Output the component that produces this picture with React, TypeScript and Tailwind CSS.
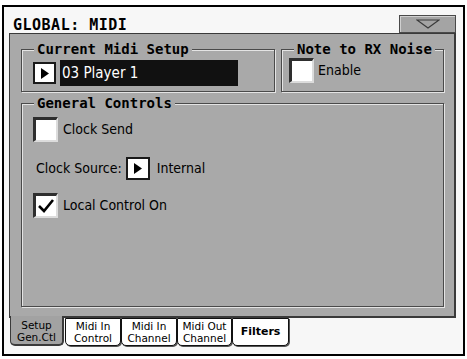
const mono = "font-['DejaVu_Sans_Mono',monospace] font-bold";

function ArrowButton({ size }: { size: string }) {
  return (
    <div className={`${size} bg-white border-2 border-[#1a1a1a] flex items-center justify-center shrink-0`}>
      <svg width="8" height="11" viewBox="0 0 8 11">
        <polygon points="0,0 8,5.5 0,11" fill="#000" />
      </svg>
    </div>
  );
}

function CheckBox({ checked }: { checked?: boolean }) {
  return (
    <div className="w-[25px] h-[25px] shrink-0 bg-white border-t-[3px] border-l-[3px] border-r-2 border-b-2 border-t-[#2e2e2e] border-l-[#2e2e2e] border-r-[#dcdcdc] border-b-[#dcdcdc] flex items-center justify-center">
      {checked && (
        <svg width="18" height="16" viewBox="0 0 18 16">
          <path d="M2 8 L7 13 L16 2" stroke="#000" strokeWidth="2.6" fill="none" />
        </svg>
      )}
    </div>
  );
}

function Group({ title, className, children }: { title: string; className: string; children: React.ReactNode }) {
  return (
    <fieldset className={`border border-[#4a4a4a] shadow-[inset_1px_1px_0_#e4e4e4,1px_1px_0_#e4e4e4] ${className}`}>
      <legend className={`ml-[12px] px-[3px] bg-[#a9a9a9] text-[14px] leading-[16px] ${mono}`}>{title}</legend>
      {children}
    </fieldset>
  );
}

const tabs = [
  { top: "Midi In", bottom: "Control", w: "w-[56px]" },
  { top: "Midi In", bottom: "Channel", w: "w-[56px]" },
  { top: "Midi Out", bottom: "Channel", w: "w-[55px]" },
];

export default function App() {
  return (
    <div className="w-[467px] h-[359px] bg-white pt-[5px] pl-[2px] font-['DejaVu_Sans_Condensed',sans-serif] text-black">
      <div className="w-[463px] h-[351px] border-2 border-black bg-[#f7f7f7] flex flex-col">
        {/* header */}
        <div className="h-[26px] flex justify-between items-start shrink-0">
          <span className={`ml-[9px] mt-[9px] text-[15px] leading-[18px] tracking-[0.5px] ${mono}`}>GLOBAL: MIDI</span>
          <div className="mt-[8px] mr-[7px] w-[57px] h-[18px] bg-[#a4a4a4] border border-[#4a4a4a] shadow-[inset_1px_1px_0_#d0d0d0] flex items-center justify-center">
            <svg width="24" height="10" viewBox="0 0 24 10">
              <polygon points="1,1 23,1 12,9" fill="none" stroke="#3a3a3a" strokeWidth="1.2" />
            </svg>
          </div>
        </div>

        {/* panel */}
        <div className="relative ml-[5px] w-[447px] h-[285px] shrink-0 bg-[#a9a9a9] border-l border-t border-r-2 border-b-2 border-[#3a3a3a] pt-[7px] pl-[11px]">
          <div className="flex gap-[6px]">
            <Group title="Current Midi Setup" className="w-[254px]">
              <div className="flex items-center gap-[4px] pl-[11px] pt-[3px] pb-[5px]">
                <ArrowButton size="w-[23px] h-[22px]" />
                <div className="w-[178px] h-[26px] bg-[#111] text-white text-[15px] leading-[26px] pl-[2px]">03 Player 1</div>
              </div>
            </Group>
            <Group title="Note to RX Noise" className="w-[163px]">
              <div className="flex items-center gap-[4px] pl-[7px] pt-[1px]">
                <CheckBox />
                <span className="text-[14px]">Enable</span>
              </div>
            </Group>
          </div>

          <Group title="General Controls" className="mt-[3px] w-[423px]">
            <div className="h-[195px] pl-[11px] pt-[6px] flex flex-col text-[14px]">
              <div className="flex items-center gap-[5px]">
                <CheckBox />
                <span>Clock Send</span>
              </div>
              <div className="flex items-center mt-[15px] pl-[3px]">
                <span>Clock Source:</span>
                <div className="ml-[4px] mr-[7px]">
                  <ArrowButton size="w-[24px] h-[23px]" />
                </div>
                <span>Internal</span>
              </div>
              <div className="flex items-center gap-[5px] mt-[13px]">
                <CheckBox checked />
                <span>Local Control On</span>
              </div>
            </div>
          </Group>
        </div>

        {/* tabs */}
        <div className="flex pl-[6px] font-['DejaVu_Sans',sans-serif] text-[10.5px] leading-[12.5px] text-center">
          <div className="relative -mt-[2px] w-[54px] h-[30px] bg-[#a2a2a2] border-l border-r-2 border-b-2 border-[#3a3a3a] rounded-b-[5px] flex flex-col items-center justify-center pt-[2px]">
            <span>Setup</span>
            <span>Gen.Ctl</span>
          </div>
          {tabs.map((t, i) => (
            <div
              key={i}
              className={`${t.w} ${i === 0 ? "ml-[1px]" : ""} h-[28px] bg-white border border-[#111] rounded-b-[5px] shadow-[1px_1px_0_#555] flex flex-col items-center justify-center`}
            >
              <span>{t.top}</span>
              <span>{t.bottom}</span>
            </div>
          ))}
          <div className="w-[57px] h-[28px] bg-white border border-[#111] rounded-b-[5px] shadow-[1px_1px_0_#555] flex items-center justify-center font-bold text-[11px]">
            Filters
          </div>
        </div>
      </div>
    </div>
  );
}
